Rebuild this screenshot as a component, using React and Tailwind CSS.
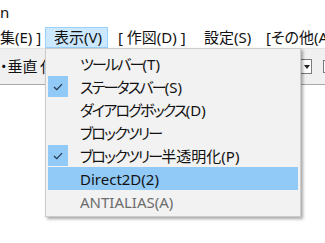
import React from 'react';

const font = "font-['Noto_Sans','Noto_Sans_CJK_JP',sans-serif] [font-feature-settings:'palt']";

const Check = () => (
  <svg width="10" height="8" viewBox="0 0 10 8">
    <path d="M1 4 L3.8 6.6 L9 1.2" fill="none" stroke="#22364d" strokeWidth="1.2" />
  </svg>
);

// kana runs are set tighter to match the narrow UI font of the original
const items = [
  { parts: [['ツールバー', true], ['(T)']] },
  { parts: [['ステータスバー', true], ['(S)']], checked: true },
  { parts: [['ダイアログボックス', true], ['(D)']] },
  { parts: [['ブロックツリー', true]] },
  { parts: [['ブロックツリー', true], ['半透明化'], ['(P)']], checked: true },
  { parts: [['Direct2D(2)']], hover: true },
  { parts: [['ANTIALIAS(A)']], disabled: true },
];

export default function App() {
  return (
    <div className={`relative w-[325px] h-[243px] overflow-hidden bg-white text-[15px] leading-none text-[#111] ${font}`}>
      {/* title */}
      <div className="h-[27px] pt-[5px]">n</div>

      {/* menu bar */}
      <div className="flex h-[21px] items-center whitespace-nowrap">
        <div className="w-[45px] shrink-0">集(E) ]</div>
        <div className="flex h-full w-[63px] shrink-0 items-center border border-[#99d1ff] bg-[#cce8ff] pl-[8px]">表示(V)</div>
        <div className="w-[88px] shrink-0 pl-[10px]">[ 作図(D) ]</div>
        <div className="w-[63px] shrink-0 pl-[8px]">設定(S)</div>
        <div className="shrink-0 pl-[7px]">[その他(A)</div>
      </div>

      {/* toolbar */}
      <div className="flex h-[37px] items-center border-t border-[#e3e3e3] border-b border-b-[#a9a9a9] bg-[#f0f0f0] whitespace-nowrap">
        <div className="w-[40px] shrink-0">・垂直</div>
        <div className="shrink-0">化</div>
        <div className="ml-auto mr-[-12px] flex shrink-0 items-center gap-[11px]">
          <div className="flex h-[15px] w-[24px] items-center justify-end border border-[#7a7a7a] bg-white pr-[1px]">
            <div className="h-0 w-0 border-x-[3px] border-t-[4px] border-x-transparent border-t-[#222]" />
          </div>
          <div className="h-[13px] w-[14px] border border-[#7a7a7a] bg-white" />
        </div>
      </div>

      {/* dropdown */}
      <div className="absolute left-[45px] top-[48px] w-[256px] border border-[#cccccc] bg-[#f2f2f2] px-[2px] py-[3px] shadow-[2px_2px_3px_rgba(0,0,0,0.35)]">
        {items.map((it, i) => (
          <div
            key={i}
            className={`flex h-[23px] items-center whitespace-nowrap ${it.hover ? 'bg-[#91c9f7]' : ''} ${it.disabled ? 'text-[#6d6d6d]' : ''}`}
          >
            <div className="flex w-[32px] shrink-0 items-center">
              {it.checked ? (
                <div className="flex h-[21px] w-[20px] items-center justify-center bg-[#91c9f7]">
                  <Check />
                </div>
              ) : null}
            </div>
            <span className="pt-[2px]">
              {it.parts.map(([t, kana], j) => (
                <span key={j} className={kana ? 'tracking-[-1.8px]' : ''}>{t}</span>
              ))}
            </span>
          </div>
        ))}
      </div>
    </div>
  );
}
